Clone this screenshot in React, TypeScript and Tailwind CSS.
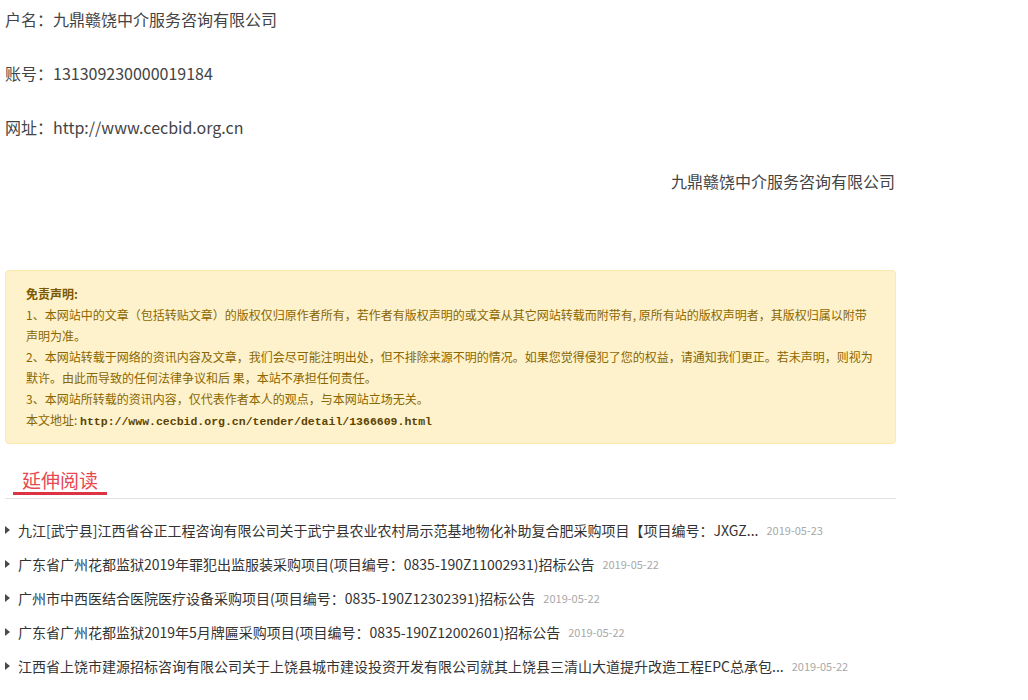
const related = [
  {
    title: '九江[武宁县]江西省谷正工程咨询有限公司关于武宁县农业农村局示范基地物化补助复合肥采购项目【项目编号：JXGZ...',
    date: '2019-05-23',
  },
  {
    title: '广东省广州花都监狱2019年罪犯出监服装采购项目(项目编号：0835-190Z11002931)招标公告',
    date: '2019-05-22',
  },
  {
    title: '广州市中西医结合医院医疗设备采购项目(项目编号：0835-190Z12302391)招标公告',
    date: '2019-05-22',
  },
  {
    title: '广东省广州花都监狱2019年5月牌匾采购项目(项目编号：0835-190Z12002601)招标公告',
    date: '2019-05-22',
  },
  {
    title: '江西省上饶市建源招标咨询有限公司关于上饶县城市建设投资开发有限公司就其上饶县三清山大道提升改造工程EPC总承包...',
    date: '2019-05-22',
  },
]

function App() {
  return (
    <div className="min-h-screen bg-white font-['Noto_Sans_CJK_SC',sans-serif]">
      <div className="w-[891px] ml-[5px]">
        {/* account info */}
        <div className="pt-[8px] text-[16px] text-[#444] leading-[22px]">
          <p className="mb-[32px]">户名：九鼎赣饶中介服务咨询有限公司</p>
          <p className="mb-[32px]">账号：131309230000019184</p>
          <p className="mb-[32px]">网址：http://www.cecbid.org.cn</p>
          <p className="text-right pr-[1px]">九鼎赣饶中介服务咨询有限公司</p>
        </div>

        {/* disclaimer */}
        <div className="mt-[78px] bg-[#fef2cc] border border-[#fce8ad] rounded-[4px] pt-[12px] pb-[11px] px-[20px] text-[12px] leading-[21px] text-[#8a6600]">
          <div className="font-bold text-[#7a5800]">免责声明:</div>
          <div className="whitespace-nowrap">1、本网站中的文章（包括转贴文章）的版权仅归原作者所有，若作者有版权声明的或文章从其它网站转载而附带有, 原所有站的版权声明者，其版权归属以附带</div>
          <div>声明为准。</div>
          <div className="whitespace-nowrap">2、本网站转载于网络的资讯内容及文章，我们会尽可能注明出处，但不排除来源不明的情况。如果您觉得侵犯了您的权益，请通知我们更正。若未声明，则视为</div>
          <div>默许。由此而导致的任何法律争议和后 果，本站不承担任何责任。</div>
          <div>3、本网站所转载的资讯内容，仅代表作者本人的观点，与本网站立场无关。</div>
          <div>
            本文地址:{' '}
            <span className="font-bold text-[#5c4300] font-['Liberation_Mono',monospace] text-[11.5px]">
              http://www.cecbid.org.cn/tender/detail/1366609.html
            </span>
          </div>
        </div>

        {/* related reading */}
        <div className="mt-[24px] border-b border-[#e2e2e2] pb-[3px]">
          <span className="inline-block ml-[8px] px-[9px] border-b-[3px] border-[#dd3444] text-[#e8474f] text-[19px] leading-[24px]">
            延伸阅读
          </span>
        </div>

        <ul className="mt-[14px]">
          {related.map((item) => (
            <li key={item.title} className="flex items-center h-[34px] whitespace-nowrap">
              <svg width="5" height="8" viewBox="0 0 5 8" className="shrink-0">
                <path d="M0 0 L5 4 L0 8 Z" fill="#4a4a4a" />
              </svg>
              <span className="ml-[8px] text-[14px] text-[#333]">{item.title}</span>
              <span className="ml-[8px] text-[11px] text-[#a8a8a8]">{item.date}</span>
            </li>
          ))}
        </ul>
      </div>
    </div>
  )
}

export default App
